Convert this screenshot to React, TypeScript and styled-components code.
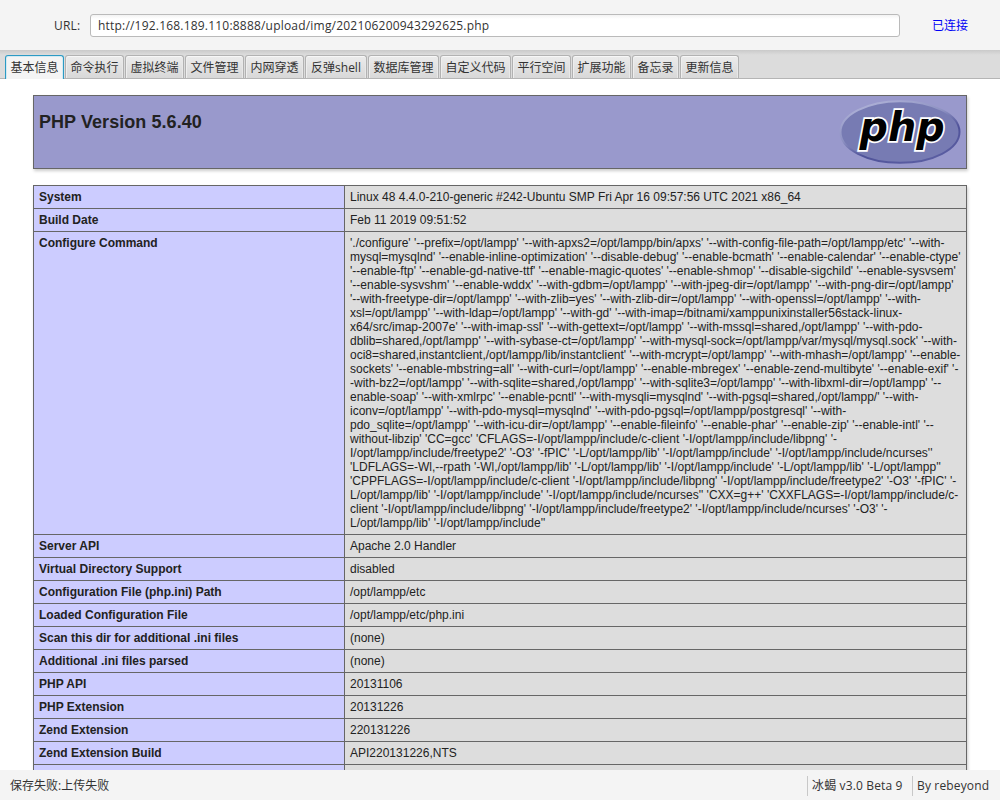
import React from "react";
import styled, { createGlobalStyle } from "styled-components";

const GlobalStyle = createGlobalStyle`
  * { box-sizing: border-box; }
  body { margin: 0; background: #fff; }
`;

const uiFont = `"Open Sans", "Noto Sans CJK SC", sans-serif`;

const Window = styled.div`
  width: 1000px;
  height: 800px;
  display: flex;
  flex-direction: column;
  overflow: hidden;
  background: #f4f4f4;
  color: #333;
  font: 12px/18px ${uiFont};
`;

const AddressBar = styled.header`
  height: 50px;
  flex: none;
  display: flex;
  align-items: center;
  padding: 1px 0 0 54px;
`;

const UrlLabel = styled.label`
  width: 36px;
  letter-spacing: 0.2px;
  white-space: nowrap;
`;

const UrlField = styled.div`
  width: 810px;
  height: 23px;
  padding: 0 7px;
  border: 1px solid #bababa;
  border-radius: 3px;
  background: linear-gradient(#f3f3f3, #fff 4px);
  line-height: 22px;
  letter-spacing: 0.2px;
  white-space: nowrap;
`;

const Status = styled.span`
  margin-left: 32px;
  padding-top: 1px;
  color: #0000f5;
`;

const TabBar = styled.nav`
  height: 29px;
  flex: none;
  display: flex;
  gap: 1px;
  padding: 5px 0 0 5px;
  background: linear-gradient(#cacaca, #dcdcdc 5px);
  border-bottom: 1px solid #b5b5b5;
`;

const Tab = styled.button<{ $width: number; $active?: boolean }>`
  width: ${(p) => p.$width}px;
  height: ${(p) => (p.$active ? 24 : 23)}px;
  padding: ${(p) => (p.$active ? 0 : "1px 0 0")};
  border: 1px solid ${(p) => (p.$active ? "#2c9ac4" : "#b2b2b2")};
  border-bottom: 0;
  border-radius: 3px 3px 0 0;
  background: ${(p) => (p.$active ? "#f4f4f4" : "linear-gradient(#ececec, #d8d8d8)")};
  box-shadow: inset 0 1px 0 ${(p) => (p.$active ? "#d3eaf2" : "#f7f7f7")},
    inset 1px 0 0 ${(p) => (p.$active ? "#d3eaf2" : "#eeeeee")},
    inset -1px 0 0 ${(p) => (p.$active ? "#d3eaf2" : "#e8e8e8")};
  color: #333;
  font: 12px/22px ${uiFont};
  white-space: nowrap;
`;

const Page = styled.main`
  flex: 1;
  min-height: 0;
  overflow: hidden;
  padding: 16px 33px 0;
  background: #fff;
  color: #222;
  font: 12px/14px "Liberation Sans", Arial, sans-serif;
`;

const Banner = styled.section`
  height: 74px;
  display: flex;
  justify-content: space-between;
  padding: 3px 5px 0 5px;
  border: 1px solid #666;
  background: #9999cc;
  box-shadow: 1px 2px 3px #ccc;
`;

const Title = styled.h1`
  margin: 13px 0 0;
  font-size: 18px;
  line-height: 21px;
  letter-spacing: 0.06px;
`;

const InfoTable = styled.div`
  margin-top: 16px;
  border: 1px solid #666;
  border-bottom: 0;
  box-shadow: 1px 2px 3px #ccc;
`;

const InfoRow = styled.div`
  display: grid;
  grid-template-columns: 311px 1fr;
  border-bottom: 1px solid #666;
`;

const Key = styled.div`
  padding: 4px 5px;
  background: #ccccff;
  border-right: 1px solid #666;
  font-weight: bold;
`;

const Value = styled.div`
  padding: 4px 5px;
  background: #dddddd;
  white-space: pre;
`;

const StatusBar = styled.footer`
  height: 30px;
  flex: none;
  display: flex;
  align-items: center;
  padding: 1px 10px 0;
`;

const Message = styled.span`
  flex: 1;
`;

const Credit = styled.span<{ $width: number }>`
  width: ${(p) => p.$width}px;
  height: 20px;
  padding-left: 4px;
  border-left: 1px solid #c8c8c8;
  line-height: 20px;
  letter-spacing: 0.15px;
  white-space: nowrap;
`;

const tabs: [string, number][] = [
  ["基本信息", 59], ["命令执行", 59], ["虚拟终端", 59], ["文件管理", 59],
  ["内网穿透", 59], ["反弹shell", 62], ["数据库管理", 71], ["自定义代码", 71],
  ["平行空间", 59], ["扩展功能", 59], ["备忘录", 47], ["更新信息", 59],
];

const configure = [
  `'./configure' '--prefix=/opt/lampp' '--with-apxs2=/opt/lampp/bin/apxs' '--with-config-file-path=/opt/lampp/etc' '--with-`,
  `mysql=mysqlnd' '--enable-inline-optimization' '--disable-debug' '--enable-bcmath' '--enable-calendar' '--enable-ctype'`,
  `'--enable-ftp' '--enable-gd-native-ttf' '--enable-magic-quotes' '--enable-shmop' '--disable-sigchild' '--enable-sysvsem'`,
  `'--enable-sysvshm' '--enable-wddx' '--with-gdbm=/opt/lampp' '--with-jpeg-dir=/opt/lampp' '--with-png-dir=/opt/lampp'`,
  `'--with-freetype-dir=/opt/lampp' '--with-zlib=yes' '--with-zlib-dir=/opt/lampp' '--with-openssl=/opt/lampp' '--with-`,
  `xsl=/opt/lampp' '--with-ldap=/opt/lampp' '--with-gd' '--with-imap=/bitnami/xamppunixinstaller56stack-linux-`,
  `x64/src/imap-2007e' '--with-imap-ssl' '--with-gettext=/opt/lampp' '--with-mssql=shared,/opt/lampp' '--with-pdo-`,
  `dblib=shared,/opt/lampp' '--with-sybase-ct=/opt/lampp' '--with-mysql-sock=/opt/lampp/var/mysql/mysql.sock' '--with-`,
  `oci8=shared,instantclient,/opt/lampp/lib/instantclient' '--with-mcrypt=/opt/lampp' '--with-mhash=/opt/lampp' '--enable-`,
  `sockets' '--enable-mbstring=all' '--with-curl=/opt/lampp' '--enable-mbregex' '--enable-zend-multibyte' '--enable-exif' '-`,
  `-with-bz2=/opt/lampp' '--with-sqlite=shared,/opt/lampp' '--with-sqlite3=/opt/lampp' '--with-libxml-dir=/opt/lampp' '--`,
  `enable-soap' '--with-xmlrpc' '--enable-pcntl' '--with-mysqli=mysqlnd' '--with-pgsql=shared,/opt/lampp/' '--with-`,
  `iconv=/opt/lampp' '--with-pdo-mysql=mysqlnd' '--with-pdo-pgsql=/opt/lampp/postgresql' '--with-`,
  `pdo_sqlite=/opt/lampp' '--with-icu-dir=/opt/lampp' '--enable-fileinfo' '--enable-phar' '--enable-zip' '--enable-intl' '--`,
  `without-libzip' 'CC=gcc' 'CFLAGS=-I/opt/lampp/include/c-client '-I/opt/lampp/include/libpng' '-`,
  `I/opt/lampp/include/freetype2' '-O3' '-fPIC' '-L/opt/lampp/lib' '-I/opt/lampp/include' '-I/opt/lampp/include/ncurses''`,
  `'LDFLAGS=-Wl,--rpath '-Wl,/opt/lampp/lib' '-L/opt/lampp/lib' '-I/opt/lampp/include' '-L/opt/lampp/lib' '-L/opt/lampp''`,
  `'CPPFLAGS=-I/opt/lampp/include/c-client '-I/opt/lampp/include/libpng' '-I/opt/lampp/include/freetype2' '-O3' '-fPIC' '-`,
  `L/opt/lampp/lib' '-I/opt/lampp/include' '-I/opt/lampp/include/ncurses'' 'CXX=g++' 'CXXFLAGS=-I/opt/lampp/include/c-`,
  `client '-I/opt/lampp/include/libpng' '-I/opt/lampp/include/freetype2' '-I/opt/lampp/include/ncurses' '-O3' '-`,
  `L/opt/lampp/lib' '-I/opt/lampp/include''`,
].join("\n");

const rows: [string, string][] = [
  ["System", "Linux 48 4.4.0-210-generic #242-Ubuntu SMP Fri Apr 16 09:57:56 UTC 2021 x86_64"],
  ["Build Date", "Feb 11 2019 09:51:52"],
  ["Configure Command", configure],
  ["Server API", "Apache 2.0 Handler"],
  ["Virtual Directory Support", "disabled"],
  ["Configuration File (php.ini) Path", "/opt/lampp/etc"],
  ["Loaded Configuration File", "/opt/lampp/etc/php.ini"],
  ["Scan this dir for additional .ini files", "(none)"],
  ["Additional .ini files parsed", "(none)"],
  ["PHP API", "20131106"],
  ["PHP Extension", "20131226"],
  ["Zend Extension", "220131226"],
  ["Zend Extension Build", "API220131226,NTS"],
  ["", " "],
];

const Wordmark = styled.text`
  font: italic bold 41px "DejaVu Sans", sans-serif;
  fill: #000;
  stroke: #fff;
  stroke-width: 3.6px;
  stroke-linejoin: miter;
  paint-order: stroke;
`;

function PhpLogo() {
  return (
    <svg width="122" height="67" viewBox="0 0 122 67" aria-label="php">
      <defs>
        <linearGradient id="rim" x1="0.2" y1="0" x2="0.8" y2="1">
          <stop offset="0" stopColor="#b0b3d8" />
          <stop offset="0.4" stopColor="#8d91c2" />
          <stop offset="0.65" stopColor="#4f5299" />
          <stop offset="1" stopColor="#5c5fa3" />
        </linearGradient>
      </defs>
      <ellipse cx="61" cy="33" rx="59.5" ry="30.8" fill="#777bb3" stroke="url(#rim)" strokeWidth="2" />
      <Wordmark x="20.6" y="42" textLength="85" lengthAdjust="spacingAndGlyphs">
        php
      </Wordmark>
    </svg>
  );
}

export default function App() {
  return (
    <Window>
      <GlobalStyle />
      <AddressBar>
        <UrlLabel>URL:</UrlLabel>
        <UrlField>http://192.168.189.110:8888/upload/img/202106200943292625.php</UrlField>
        <Status>已连接</Status>
      </AddressBar>
      <TabBar>
        {tabs.map(([name, width], i) => (
          <Tab key={name} $width={width} $active={i === 0}>{name}</Tab>
        ))}
      </TabBar>
      <Page>
        <Banner>
          <Title>PHP Version 5.6.40</Title>
          <PhpLogo />
        </Banner>
        <InfoTable>
          {rows.map(([key, value]) => (
            <InfoRow key={key}>
              <Key>{key}</Key>
              <Value>{value}</Value>
            </InfoRow>
          ))}
        </InfoTable>
      </Page>
      <StatusBar>
        <Message>保存失败:上传失败</Message>
        <Credit $width={105}>冰蝎 v3.0 Beta 9</Credit>
        <Credit $width={78}>By rebeyond</Credit>
      </StatusBar>
    </Window>
  );
}
